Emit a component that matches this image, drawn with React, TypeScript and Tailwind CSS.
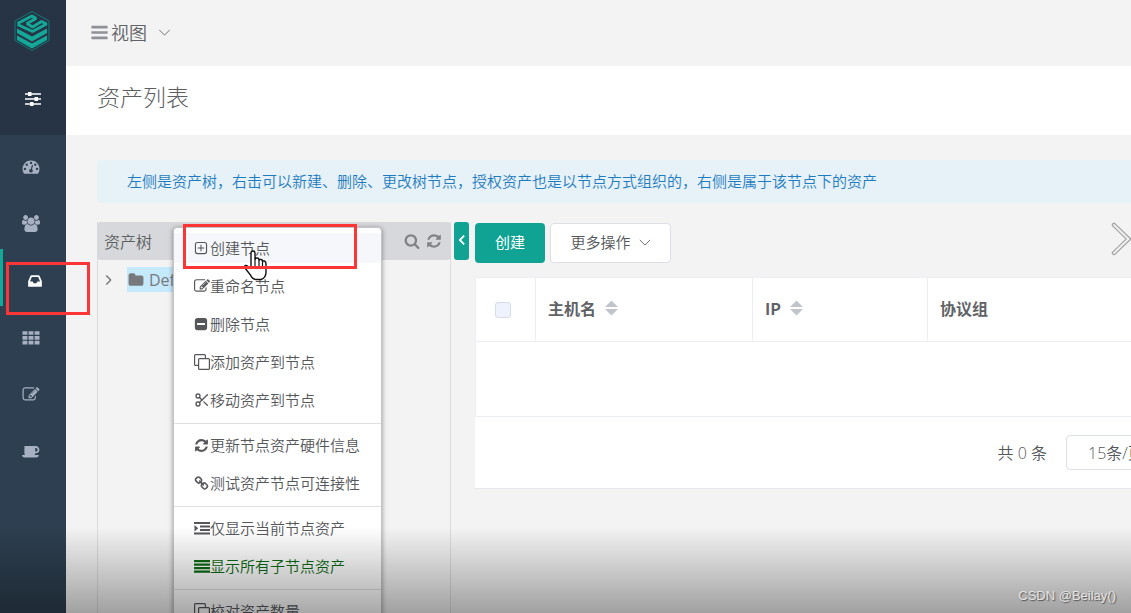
import { ReactNode } from "react";
import clsx from "clsx";
import { Scissors } from "lucide-react";

type IconProps = { d: string; box?: string; className?: string };

const Glyph = ({ d, box = "0 0 1792 1792", className }: IconProps) => (
	<svg viewBox={box} className={clsx("shrink-0 fill-current", className)} aria-hidden="true">
		<path d={d} />
	</svg>
);

const paths = {
	bars: "M1664 1344v128q0 26-19 45t-45 19h-1408q-26 0-45-19t-19-45v-128q0-26 19-45t45-19h1408q26 0 45 19t19 45zm0-512v128q0 26-19 45t-45 19h-1408q-26 0-45-19t-19-45v-128q0-26 19-45t45-19h1408q26 0 45 19t19 45zm0-512v128q0 26-19 45t-45 19h-1408q-26 0-45-19t-19-45v-128q0-26 19-45t45-19h1408q26 0 45 19t19 45z",
	dashboard:
		"M384 1152q0-53-37.5-90.5t-90.5-37.5-90.5 37.5-37.5 90.5 37.5 90.5 90.5 37.5 90.5-37.5 37.5-90.5zm192-448q0-53-37.5-90.5t-90.5-37.5-90.5 37.5-37.5 90.5 37.5 90.5 90.5 37.5 90.5-37.5 37.5-90.5zm428 481l101-382q6-26-7.5-48.5t-38.5-29.5-48 6.5-30 39.5l-101 382q-60 5-107 43.5t-63 98.5q-20 77 20 146t117 89 146-20 89-117q16-60-6-117t-72-91zm660-33q0-53-37.5-90.5t-90.5-37.5-90.5 37.5-37.5 90.5 37.5 90.5 90.5 37.5 90.5-37.5 37.5-90.5zm-640-640q0-53-37.5-90.5t-90.5-37.5-90.5 37.5-37.5 90.5 37.5 90.5 90.5 37.5 90.5-37.5 37.5-90.5zm448 192q0-53-37.5-90.5t-90.5-37.5-90.5 37.5-37.5 90.5 37.5 90.5 90.5 37.5 90.5-37.5 37.5-90.5zm320 448q0 261-141 483-19 29-54 29h-1402q-35 0-54-29-141-221-141-483 0-182 71-348t191-286 286-191 348-71 348 71 286 191 191 286 71 348z",
	users: "M593 896q-162 5-265 128h-134q-82 0-138-40.5t-56-118.5q0-353 124-353 6 0 43.5 21t97.5 42.5 119 21.5q67 0 133-23-5 37-5 66 0 139 81 256zm1071 637q0 120-73 189.5t-194 69.5h-874q-121 0-194-69.5t-73-189.5q0-53 3.5-103.5t14-109 26.5-108.5 43-97.5 62-81 85.5-53.5 111.5-20q10 0 43 21.5t73 48 107 48 135 21.5 135-21.5 107-48 73-48 43-21.5q61 0 111.5 20t85.5 53.5 62 81 43 97.5 26.5 108.5 14 109 3.5 103.5zm-1024-1277q0 106-75 181t-181 75-181-75-75-181 75-181 181-75 181 75 75 181zm704 384q0 159-112.5 271.5t-271.5 112.5-271.5-112.5-112.5-271.5 112.5-271.5 271.5-112.5 271.5 112.5 112.5 271.5zm576 225q0 78-56 118.5t-138 40.5h-134q-103-123-265-128 81-117 81-256 0-29-5-66 66 23 133 23 59 0 119-21.5t97.5-42.5 43.5-21q124 0 124 353zm-128-609q0 106-75 181t-181 75-181-75-75-181 75-181 181-75 181 75 75 181z",
	inbox: "M1151 960h316q-1-3-2.5-8.5t-2.5-7.5l-212-496h-708l-212 496q-1 3-2.5 8.5t-2.5 7.5h316l95 192h320zm513 30v482q0 26-19 45t-45 19h-1408q-26 0-45-19t-19-45v-482q0-62 25-123l238-552q10-25 36.5-42t52.5-17h832q26 0 52.5 17t36.5 42l238 552q25 61 25 123z",
	edit: "M888 1184l116-116-152-152-116 116v56h96v96h56zm440-720q-16-16-33 1l-350 350q-17 17-1 33t33-1l350-350q17-17 1-33zm80 594v190q0 119-84.5 203.5t-203.5 84.5h-832q-119 0-203.5-84.5t-84.5-203.5v-832q0-119 84.5-203.5t203.5-84.5h832q63 0 117 25 15 7 18 23 3 17-9 29l-49 49q-14 14-32 8-23-6-45-6h-832q-66 0-113 47t-47 113v832q0 66 47 113t113 47h832q66 0 113-47t47-113v-126q0-13 9-22l64-64q15-15 35-7t20 29zm-96-738l288 288-672 672h-288v-288zm444 132l-92 92-288-288 92-92q28-28 68-28t68 28l152 152q28 28 28 68t-28 68z",
	coffee: "M1664 704q0-80-56-136t-136-56h-64v384h64q80 0 136-56t56-136zm-1664 576h1792q0 106-75 181t-181 75h-1280q-106 0-181-75t-75-181zm1856-576q0 159-112.5 271.5t-271.5 112.5h-64v32q0 92-66 158t-158 66h-704q-92 0-158-66t-66-158v-736q0-26 19-45t45-19h1152q159 0 271.5 112.5t112.5 271.5z",
	folder: "M1728 608v704q0 92-66 158t-158 66h-1216q-92 0-158-66t-66-158v-960q0-92 66-158t158-66h320q92 0 158 66t66 158v32h672q92 0 158 66t66 158z",
	search: "M1216 832q0-185-131.5-316.5t-316.5-131.5-316.5 131.5-131.5 316.5 131.5 316.5 316.5 131.5 316.5-131.5 131.5-316.5zm512 832q0 52-38 90t-90 38q-54 0-90-38l-343-342q-179 124-399 124-143 0-273.5-55.5t-225-150-150-225-55.5-273.5 55.5-273.5 150-225 225-150 273.5-55.5 273.5 55.5 225 150 150 225 55.5 273.5q0 220-124 399l343 343q37 37 37 90z",
	refresh:
		"M1639 1056q0 5-1 7-64 268-268 434.5t-478 166.5q-146 0-282.5-55t-243.5-157l-129 129q-19 19-45 19t-45-19-19-45v-448q0-26 19-45t45-19h448q26 0 45 19t19 45-19 45l-137 137q71 66 161 102t187 36q134 0 250-65t186-179q11-17 53-117 8-23 30-23h192q13 0 22.5 9.5t9.5 22.5zm25-800v448q0 26-19 45t-45 19h-448q-26 0-45-19t-19-45 19-45l138-138q-148-137-349-137-134 0-250 65t-186 179q-11 17-53 117-8 23-30 23h-199q-13 0-22.5-9.5t-9.5-22.5v-7q65-268 270-434.5t480-166.5q146 0 284 55.5t245 156.5l130-129q19-19 45-19t45 19 19 45z",
	link: "M1520 1216q0-40-28-68l-208-208q-28-28-68-28-42 0-72 32 3 3 19 18.5t21.5 21.5 15 19 13 25.5 3.5 27.5q0 40-28 68t-68 28q-15 0-27.5-3.5t-25.5-13-19-15-21.5-21.5-18.5-19q-33 31-33 73 0 40 28 68l206 207q27 27 68 27 40 0 68-26l147-146q28-28 28-67zm-703-705q0-40-28-68l-206-207q-28-28-68-28-39 0-68 27l-147 146q-28 28-28 67 0 40 28 68l208 208q27 27 68 27 42 0 72-31-3-3-19-18.5t-21.5-21.5-15-19-13-25.5-3.5-27.5q0-40 28-68t68-28q15 0 27.5 3.5t25.5 13 19 15 21.5 21.5 18.5 19q33-31 33-73zm895 705q0 120-85 203l-147 146q-83 83-203 83-121 0-204-85l-206-207q-83-83-83-203 0-123 88-209l-88-88q-86 88-208 88-120 0-204-84l-208-208q-84-84-84-204t85-203l147-146q83-83 203-83 121 0 204 85l206 207q83 83 83 203 0 123-88 209l88 88q86-88 208-88 120 0 204 84l208 208q84 84 84 204z",
	plusSquare:
		"M4 1h8a3 3 0 0 1 3 3v8a3 3 0 0 1-3 3H4a3 3 0 0 1-3-3V4a3 3 0 0 1 3-3zm0 1.3A1.7 1.7 0 0 0 2.3 4v8A1.7 1.7 0 0 0 4 13.7h8a1.7 1.7 0 0 0 1.7-1.7V4A1.7 1.7 0 0 0 12 2.3zM7.4 4.2h1.2v3.2h3.2v1.2H8.6v3.2H7.4V8.6H4.2V7.4h3.2z",
	minusSquare:
		"M4 1h8a3 3 0 0 1 3 3v8a3 3 0 0 1-3 3H4a3 3 0 0 1-3-3V4a3 3 0 0 1 3-3zM3.5 6.8v2.4h9V6.8z",
	clone: "M1.5 0h9A1.5 1.5 0 0 1 12 1.5V4h2.500A1.5 1.5 0 0 1 16 5.5v9a1.5 1.5 0 0 1-1.500 1.500h-9A1.5 1.5 0 0 1 4 14.5V12H1.500A1.5 1.5 0 0 1 0 10.5v-9A1.5 1.5 0 0 1 1.500 0zm0 1.200a.3.3 0 0 0-.3.3v9a.3.3 0 0 0 .3.3H4V5.500A1.5 1.5 0 0 1 5.500 4h5.300V1.500a.3.3 0 0 0-.3-.3zm4 4a.3.3 0 0 0-.3.3v9a.3.3 0 0 0 .3.3h9a.3.3 0 0 0 .3-.3v-9a.3.3 0 0 0-.3-.3z",
	th: "M0 2h4.600v3.500H0zM5.700 2h4.600v3.500H5.700zM11.400 2H16v3.500h-4.600zM0 6.500h4.600V10H0zM5.700 6.500h4.600V10H5.700zM11.400 6.500H16V10h-4.600zM0 11h4.600v3.500H0zM5.700 11h4.600v3.500H5.700zM11.400 11H16v3.500h-4.600z",
	sliders:
		"M0 2.300h3V1h3.500v1.300H16v1.400H6.500V5H3V3.700H0zM0 7.300h9.500V6H13v1.300h3v1.400h-3V10H9.500V8.700H0zM0 12.300h5V11h3.500v1.300H16v1.400H8.500V15H5v-1.300H0z",
	indent: "M0 2h16v2H0zM6 5.500h10v2H6zM6 9h10v2H6zM0 12.500h16v2H0zM0.500 5l3.700 3.250L0.500 11.500z",
	lines: "M0 2h16v2.200H0zM0 5.500h16v2.200H0zM0 9h16v2.200H0zM0 12.500h16v2.200H0z",
};

const Chevron = ({ className }: { className?: string }) => (
	<svg viewBox="0 0 14 8" className={clsx("shrink-0 fill-none stroke-current", className)} aria-hidden="true">
		<path d="M1 1l6 6 6-6" />
	</svg>
);

const Logo = () => (
	<svg viewBox="0 0 36 42" className="h-[42px] w-9" aria-hidden="true">
		<path d="M18 1.500L35 11v19.500L18 40.500 1 30.500V11z" fill="none" stroke="#128079" strokeWidth="0.900" />
		<g fill="none" stroke="#13a898" strokeWidth="3" strokeLinejoin="bevel">
			<path d="M3.500 13.500L18 6l4 2.500-9 5 5.500 3.500 9-5.500 5 2.500-14 7.500L3.500 14.500" />
		</g>
		<g fill="#13a898">
			<path d="M3 18.500l15 8.100 15-8.100v4.600l-15 8.300-15-8.300z" />
			<path d="M3 25.500l15 8.100 15-8.100v4.400l-15 8.600-15-8.600z" />
		</g>
	</svg>
);

const navItems = [
	{ label: "仪表盘", d: paths.dashboard },
	{ label: "用户管理", d: paths.users, box: "0 0 1920 1792" },
	{ label: "资产管理", d: paths.inbox, active: true },
	{ label: "应用管理", d: paths.th, box: "0 0 16 16" },
	{ label: "权限管理", d: paths.edit },
	{ label: "会话管理", d: paths.coffee, box: "0 0 1920 1792" },
];

const Sidebar = () => (
	<nav className="flex w-[66px] shrink-0 flex-col bg-[#2d3f50]">
		<div className="flex h-[135px] flex-col items-center bg-[#263445] pt-[10px]">
			<a href="#home" aria-label="首页" className="-ml-0.5">
				<Logo />
			</a>
			<button aria-label="切换视图" className="mt-[39px] text-white">
				<Glyph d={paths.sliders} box="0 0 16 16" className="size-4" />
			</button>
		</div>
		{navItems.map(({ label, d, box, active }) => (
			<a
				key={label}
				href={`#${label}`}
				aria-label={label}
				className={clsx(
					"flex h-[57px] items-center justify-center border-l-[3px] pt-[6px]",
					active ? "border-[#13a898] text-white" : "border-transparent pr-[7px] text-[#a7b1c2]"
				)}>
				<Glyph d={d} box={box} className={clsx("w-[18px]", active ? "h-4" : "h-[17px]")} />
			</a>
		))}
	</nav>
);

type MenuEntry = { label: string; icon: ReactNode; state?: "hover" | "on" };

const small = (d: string) => <Glyph d={d} box="0 0 16 16" className="size-[14px]" />;

const groups: MenuEntry[][] = [
	[
		{ label: "创建节点", icon: small(paths.plusSquare), state: "hover" },
		{ label: "重命名节点", icon: <Glyph d={paths.edit} className="size-4" /> },
		{ label: "删除节点", icon: small(paths.minusSquare) },
		{ label: "添加资产到节点", icon: <Glyph d={paths.clone} box="0 0 16 16" className="size-4" /> },
		{ label: "移动资产到节点", icon: <Scissors className="size-4" strokeWidth={2} /> },
	],
	[
		{ label: "更新节点资产硬件信息", icon: <Glyph d={paths.refresh} className="size-[15px]" /> },
		{ label: "测试资产节点可连接性", icon: <Glyph d={paths.link} className="size-[15px]" /> },
	],
	[
		{ label: "仅显示当前节点资产", icon: <Glyph d={paths.indent} box="0 0 16 16" className="size-4" /> },
		{ label: "显示所有子节点资产", icon: <Glyph d={paths.lines} box="0 0 16 16" className="size-4" />, state: "on" },
	],
	[{ label: "校对资产数量", icon: <Glyph d={paths.clone} box="0 0 16 16" className="size-4" /> }],
];

const ContextMenu = () => (
	<div
		role="menu"
		className="absolute left-[75px] top-[5px] z-10 w-[209px] rounded border border-[#c4c4c4] bg-white pt-px shadow-[0_1px_5px_rgba(0,0,0,0.4)]">
		{groups.map((group, i) => (
			<div key={i} className={clsx("flex flex-col", i > 0 && "mt-1 border-t border-[#e0e0e0] pt-[2px]")}>
				{group.map(({ label, icon, state }) => (
					<button
						key={label}
						role="menuitem"
						className={clsx(
							"my-1 flex h-[30px] items-center pl-5 text-[15px]",
							state === "hover" && "bg-[#f5f7fa]",
							state === "on" ? "text-[#0b6b14]" : "text-[#55575b]"
						)}>
						<span className="flex w-4 items-center">{icon}</span>
						{label}
					</button>
				))}
			</div>
		))}
	</div>
);

const AssetTree = () => (
	<section className="relative w-[354px] shrink-0 border-x border-[#dcdcde]">
		<header className="-mx-px flex h-[38px] items-center justify-between rounded bg-[#d7d8dc] pl-[7px] pr-[9px] text-[#5c5f61]">
			<h2 className="text-base">资产树</h2>
			<div className="flex gap-[6px] text-[#808285]">
				<button aria-label="搜索">
					<Glyph d={paths.search} className="size-4" />
				</button>
				<button aria-label="刷新">
					<Glyph d={paths.refresh} className="size-4" />
				</button>
			</div>
		</header>
		<div className="mt-[7px] flex h-[25px] items-center text-base text-[#777a7d]">
			<button aria-label="展开" className="ml-[5px] w-6">
				<Chevron className="h-[6px] w-[11px] -rotate-90 stroke-2" />
			</button>
			<a href="#default" className="flex h-full items-center gap-[5px] bg-[#c5e9fd] px-px">
				<Glyph d={paths.folder} className="size-4" />
				<span className="font-['Open_Sans','Noto_Sans_CJK_SC',sans-serif] font-normal">Default</span>
			</a>
		</div>
		<ContextMenu />
	</section>
);

const Sorter = () => (
	<svg viewBox="0 0 13 16" className="h-4 w-[13px] fill-[#c0c4cc]" aria-hidden="true">
		<path d="M6.500 0.500L13 7H0zM0 9h13l-6.500 6.500z" />
	</svg>
);

const columns = [
	{ title: "主机名", sortable: true, width: "w-[217px]" },
	{ title: "IP", sortable: true, width: "w-[175px]" },
	{ title: "协议组", sortable: false, width: "" },
];

const AssetTable = () => (
	<div className="mt-[14px] bg-white">
		<table className="w-full table-fixed border-collapse border border-r-0 border-[#ebeef5] text-left">
			<thead>
				<tr className="h-16">
					<th className="w-[60px] border border-[#ebeef5] pb-1 text-center">
						<input
							type="checkbox"
							aria-label="全选"
							className="ml-[-5px] size-4 appearance-none rounded-[3px] border border-[#d5dbe8] bg-[#edf2fc] align-middle"
						/>
					</th>
					{columns.map(({ title, sortable, width }) => (
						<th
							key={title}
							className={clsx("border border-r-0 border-[#ebeef5] px-3 pb-1 text-base font-bold text-[#606266]", width)}>
							<span className="flex items-center gap-[9px]">
								{title}
								{sortable && <Sorter />}
							</span>
						</th>
					))}
				</tr>
			</thead>
			<tbody>
				<tr className="h-[75px]">
					<td colSpan={4} />
				</tr>
			</tbody>
		</table>
		<div className="flex h-[72px] items-center justify-end gap-[19px] overflow-hidden border-b border-[#e6e8ee] font-['Open_Sans','Noto_Sans_CJK_SC',sans-serif] text-base text-[#55575b]">
			<span>共 0 条</span>
			<select
				aria-label="每页条数"
				className="-mr-[45px] h-[35px] w-[110px] shrink-0 appearance-none rounded border border-[#dcdfe6] bg-white pl-[21px]">
				<option>15条/页</option>
			</select>
		</div>
	</div>
);

// Pointer resting on the first menu entry
const HandCursor = () => (
	<svg viewBox="0 0 24 32" className="absolute left-[243px] top-[249px] z-20 h-8 w-6" aria-hidden="true">
		<path
			d="M8 19V4.500Q8 2 10 2t2 2.500V11q0-2 2-2t2 2v1q0-2 2-1.500t1.500 2.500q.5-1.500 2-1t1.500 3v8q0 6-5 7.500h-5q-4-.500-5.500-4.500L2 19q-1-2 .500-2.500t3 1.500z"
			fill="#fff"
			stroke="#111"
			strokeWidth="1.400"
		/>
		<path d="M12 11v6M16 12v5M19.500 13v4" stroke="#111" strokeWidth="1.200" />
	</svg>
);

export default function App() {
	return (
		<div className="relative flex h-screen overflow-hidden bg-[#f3f3f3] font-['Noto_Sans_CJK_SC',sans-serif] font-[350]">
			<Sidebar />
			<main className="min-w-0 flex-1">
				<div className="flex h-[66px] items-center pb-[2px] pl-6 text-[#606266]">
					<button className="flex items-center text-lg">
						<Glyph d={paths.bars} className="mr-[2px] size-[19px] text-[#909198]" />
						视图
						<Chevron className="ml-[11px] h-[7px] w-[13px]" />
					</button>
				</div>
				<div className="flex h-[69px] items-center bg-white pb-2 pl-[31px]">
					<h1 className="text-[23px] font-light text-[#5c5f61]">资产列表</h1>
				</div>
				<div className="pl-[31px] pt-[25px]">
					<p className="flex h-[43px] items-center whitespace-nowrap rounded-l bg-[#e6f1f8] pl-[30px] text-[15px] text-[#1f7cc0]">
						左侧是资产树，右击可以新建、删除、更改树节点，授权资产也是以节点方式组织的，右侧是属于该节点下的资产
					</p>
					<div className="mt-[19px] flex items-stretch">
						<AssetTree />
						<button
							aria-label="收起"
							className="ml-[3px] flex h-[38px] w-[15px] shrink-0 items-center justify-center rounded-[3px] bg-[#10a293] pb-[2px] text-white">
							<Chevron className="h-[6px] w-[10px] rotate-90 stroke-[2.5]" />
						</button>
						<div className="ml-[6px] min-h-[400px] min-w-0 flex-1 pt-px">
							<div className="flex gap-[5px] text-[15px]">
								<button className="h-10 w-[70px] rounded bg-[#10a293] pb-[2px] font-normal text-white">创建</button>
								<button className="flex h-10 w-[121px] items-center justify-center gap-2 rounded border border-[#dcdfe6] bg-white pb-[2px] text-[#55575b]">
									更多操作
									<Chevron className="h-[7px] w-3" />
								</button>
							</div>
							<AssetTable />
						</div>
					</div>
				</div>
			</main>

			<HandCursor />
			<div className="absolute left-[6px] top-[262px] z-30 h-[53px] w-[84px] border-[3px] border-[#fc3636]" />
			<div className="absolute left-[183px] top-[224px] z-30 h-[45px] w-[174px] border-[3px] border-[#fc3636]" />
			<button aria-label="下一张" className="absolute right-0 top-[221px] z-20">
				<svg viewBox="0 0 20 36" className="h-9 w-5 fill-none" aria-hidden="true">
					<path d="M3 4l14.500 14L3 32" stroke="#a5a5a5" strokeWidth="4.500" strokeLinecap="round" />
					<path d="M3 4l14.500 14L3 32" stroke="#f0f0f0" strokeWidth="2" strokeLinecap="round" />
				</svg>
			</button>
			<div className="pointer-events-none absolute inset-x-0 bottom-0 z-20 h-[86px] bg-linear-to-b from-black/0 to-black/34" />
			<span className="absolute bottom-[9px] right-[15px] z-30 font-['Liberation_Sans',sans-serif] text-[13px] leading-4 text-[#e4e4e4] [text-shadow:1px_1px_1px_#555]">
				CSDN @Beilay()
			</span>
		</div>
	);
}
